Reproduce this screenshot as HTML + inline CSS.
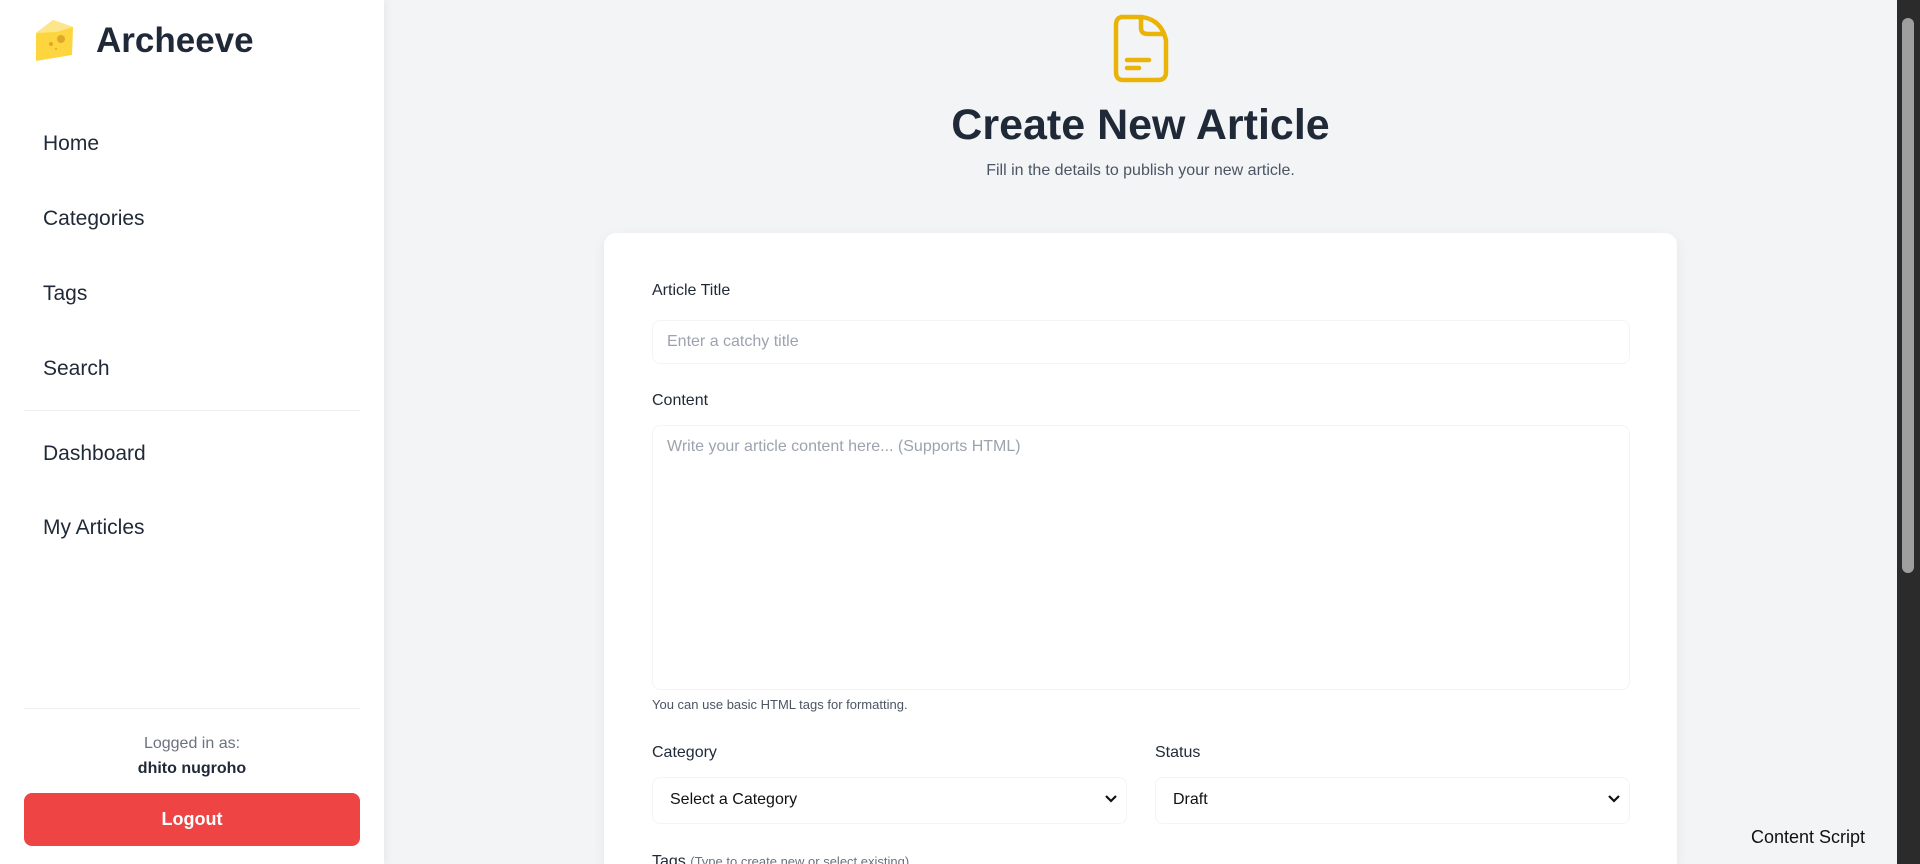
<!DOCTYPE html>
<html style="width:1920px;height:864px;overflow:hidden"><head><meta charset="utf-8"><style>
*{box-sizing:border-box;margin:0;padding:0}
body{width:1920px;height:864px;overflow:hidden;background:#f3f4f6;font-family:"Liberation Sans",sans-serif;color:#1f2937;position:relative}
.side{position:absolute;left:0;top:0;width:384px;height:864px;background:#fff;box-shadow:2px 0 8px rgba(0,0,0,.06)}
.logo{position:absolute;left:96px;top:21px;font-size:35px;font-weight:bold;color:#1f2937}
.nav{position:absolute;left:43px;font-size:21px;color:#1f2937}
.hr{position:absolute;left:24px;width:336px;height:1px;background:#eceef1}
.card{position:absolute;left:604px;top:233px;width:1073px;height:631px;background:#fff;border-radius:12px 12px 0 0;box-shadow:0 4px 14px rgba(0,0,0,.06)}
.lab{position:absolute;font-size:16px;color:#1f2937}
.inp{position:absolute;border:1px solid #f3f4f6;border-radius:8px;background:#fff;font-size:16px;color:#9ca3af;padding-left:14px}
.sel{position:absolute;border:1px solid #f3f4f6;border-radius:8px;font-size:16px;color:#111;padding-left:17px;line-height:44px}
.chev{position:absolute;right:8px;top:16px}
</style></head><body>
<div class="side">
<svg style="position:absolute;left:33px;top:17px" width="42" height="44" viewBox="0 0 42 44"><path d="M3 16 L20 3 L40 10 L39 38 L3 44 Z" fill="#fcd53f"/><path d="M3 16 L20 3 L40 10 L24 15 Z" fill="#fde68a"/><circle cx="28" cy="22" r="4" fill="#e0a72b"/><circle cx="18" cy="27" r="2" fill="#e0a72b"/><circle cx="23" cy="32" r="1" fill="#e0a72b"/></svg>
<div class="logo">Archeeve</div>
<div class="nav" style="top:132px">Home</div>
<div class="nav" style="top:207px">Categories</div>
<div class="nav" style="top:282px">Tags</div>
<div class="nav" style="top:357px">Search</div>
<div class="hr" style="top:410px"></div>
<div class="nav" style="top:442px">Dashboard</div>
<div class="nav" style="top:516px">My Articles</div>
<div class="hr" style="top:708px"></div>
<div style="position:absolute;left:0;width:384px;top:735px;text-align:center;font-size:16px;color:#6b7280">Logged in as:</div>
<div style="position:absolute;left:0;width:384px;top:760px;text-align:center;font-size:16px;font-weight:bold;color:#1f2937">dhito nugroho</div>
<div style="position:absolute;left:24px;top:793px;width:336px;height:53px;background:#ef4444;border-radius:8px;color:#fff;font-weight:bold;font-size:18px;text-align:center;line-height:53px">Logout</div>
</div>
<svg style="position:absolute;left:1111px;top:14px" width="60" height="70" viewBox="0 0 60 70"><path d="M10 3 H30 Q50 5 55 26 V58 Q55 66 47 66 H12 Q5 66 5 58 V11 Q5 3 12 3 Z M30 3 V14 Q30 20 37 20 H55" fill="none" stroke="#eab308" stroke-width="4.5" stroke-linejoin="round"/><path d="M16 46 H38 M16 54 H28" stroke="#eab308" stroke-width="4.5" stroke-linecap="round"/></svg>
<div style="position:absolute;left:384px;width:1513px;top:101px;text-align:center;font-size:43px;font-weight:bold;color:#1f2937">Create New Article</div>
<div style="position:absolute;left:384px;width:1513px;top:162px;text-align:center;font-size:16px;color:#4b5563">Fill in the details to publish your new article.</div>
<div class="card"></div>
<div class="lab" style="left:652px;top:282px">Article Title</div>
<div class="inp" style="left:652px;top:320px;width:978px;height:44px;line-height:42px">Enter a catchy title</div>
<div class="lab" style="left:652px;top:392px">Content</div>
<div class="inp" style="left:652px;top:425px;width:978px;height:265px;padding-top:12px">Write your article content here... (Supports HTML)</div>
<div style="position:absolute;left:652px;top:697px;font-size:13px;color:#4b5563">You can use basic HTML tags for formatting.</div>
<div class="lab" style="left:652px;top:744px">Category</div>
<div class="lab" style="left:1155px;top:744px">Status</div>
<div class="sel" style="left:652px;top:777px;width:475px;height:47px">Select a Category<svg class="chev" width="14" height="10" viewBox="0 0 14 10"><path d="M2 2 L7 7 L12 2" fill="none" stroke="#111" stroke-width="2.2"/></svg></div>
<div class="sel" style="left:1155px;top:777px;width:475px;height:47px">Draft<svg class="chev" width="14" height="10" viewBox="0 0 14 10"><path d="M2 2 L7 7 L12 2" fill="none" stroke="#111" stroke-width="2.2"/></svg></div>
<div class="lab" style="left:652px;top:853px">Tags <span style="font-size:13px;color:#6b7280">(Type to create new or select existing)</span></div>
<div style="position:absolute;left:1751px;top:827px;font-size:18px;color:#111">Content Script</div>
<div style="position:absolute;left:1897px;top:0;width:23px;height:864px;background:#2b2b2b"><div style="position:absolute;left:5px;top:18px;width:12px;height:555px;background:#9f9f9f;border-radius:6px"></div></div>
</body></html>
